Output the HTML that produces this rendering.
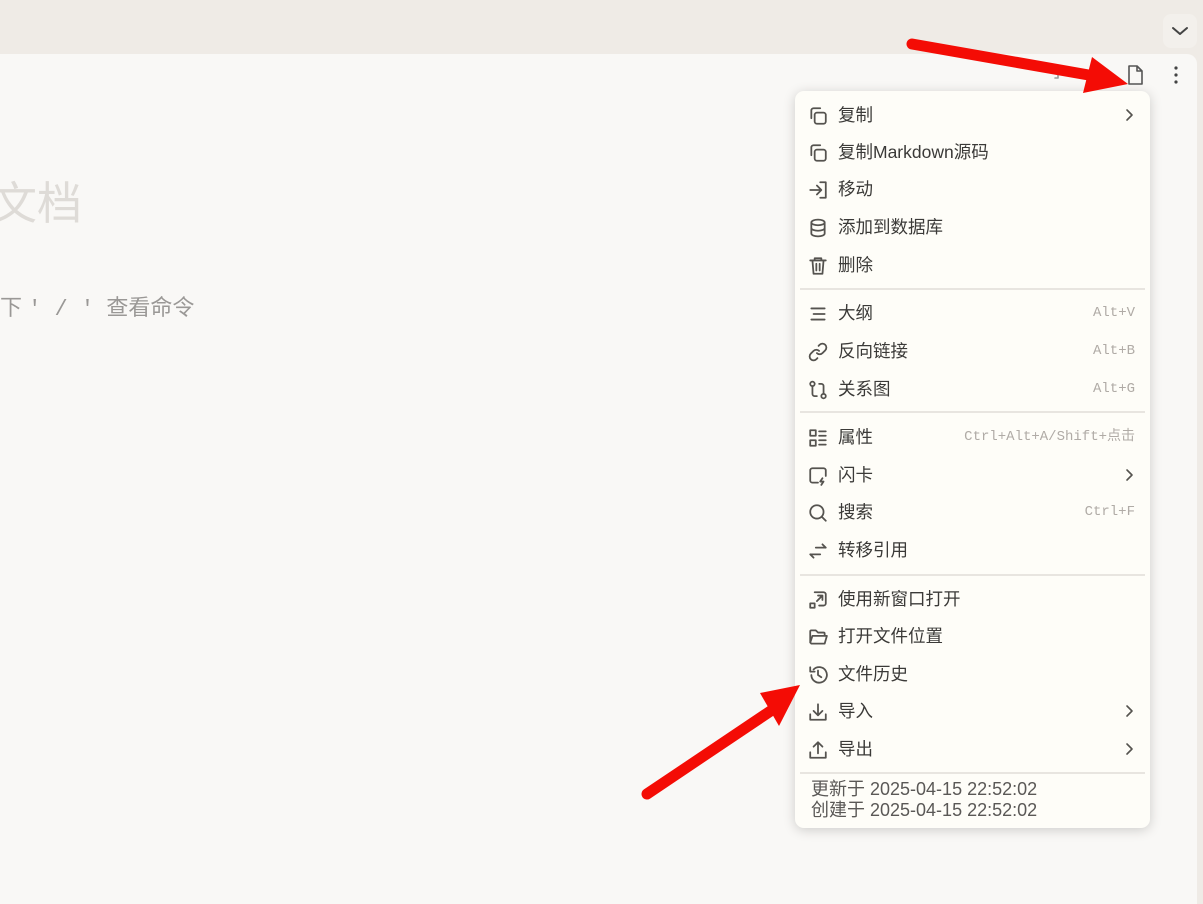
<!DOCTYPE html>
<html><head><meta charset="utf-8"><style>
*{margin:0;padding:0;box-sizing:border-box}
body{width:1203px;height:894px;overflow:hidden;background:#efebe6;font-family:"Liberation Sans","Noto Sans CJK SC",sans-serif;position:relative}
.main{position:absolute;left:0;top:54px;width:1197px;height:850px;background:#f9f8f6;border-top-right-radius:10px}
.chev{position:absolute;left:1163px;top:14px;width:34px;height:34px;border-radius:8px;background:#f3f0ec}
.title{position:absolute;left:-8px;top:174px;font-size:45px;color:#dedbd7;line-height:60px}
.hint{position:absolute;left:0;top:293px;font-size:22px;color:#9a9896;white-space:pre;line-height:30px}
.menu{position:absolute;left:795px;top:91px;width:355px;height:737px;background:#fefdf8;border-radius:9px;box-shadow:0 2px 12px rgba(0,0,0,.18)}
.r{position:absolute;left:0;width:355px;height:36px}
.r svg{position:absolute;left:13px;top:9px}
.r svg.a{left:auto;right:14px;top:10px}
.r .t{position:absolute;left:43px;top:6px;font-size:17.5px;color:#3b3a38;line-height:24px}
.r .k{position:absolute;right:15px;top:10px;font-family:"Liberation Mono","Noto Sans CJK SC",monospace;font-size:14px;color:#b0aba6;line-height:16px}
.sep{position:absolute;left:5px;width:345px;height:2px;background:#e8e5e0}
.foot{position:absolute;left:16px;top:688px;font-size:18px;color:#5a5856;line-height:21px}
svg{fill:none;stroke:#55534f;stroke-width:1.6;stroke-linecap:round;stroke-linejoin:round}
</style></head><body>
<div class="chev"><svg width="34" height="34" viewBox="0 0 34 34"><path d="M10 14l7 6 7-6" stroke="#444" stroke-width="2"/></svg></div>
<div class="main"></div>
<div class="title">文档</div>
<div class="hint">下 <span style="font-family:'Liberation Mono',monospace">' / '</span>  查看命令</div>
<svg style="position:absolute;left:1045px;top:65px" width="20" height="20" viewBox="0 0 20 20"><circle cx="5" cy="7" r="1.3" fill="#888" stroke="none"/><path d="M8 7h5v6h-3" stroke="#999"/></svg>
<svg style="position:absolute;left:1125px;top:64px" width="20" height="22" viewBox="0 0 20 22"><path d="M4 2h8l5 5v13H4z M12 2v5h5" stroke="#555"/></svg>
<svg style="position:absolute;left:1166px;top:64px" width="20" height="22" viewBox="0 0 20 22"><circle cx="10" cy="4" r="1.6" fill="#444" stroke="none"/><circle cx="10" cy="11" r="1.6" fill="#444" stroke="none"/><circle cx="10" cy="18" r="1.6" fill="#444" stroke="none"/></svg>
<div class="menu">
<div class="r" style="top:6px"><svg width="20" height="20" viewBox="0 0 18 18"><rect x="6" y="6" width="10" height="10" rx="2"/><path d="M3 11V4a2 2 0 0 1 2-2h6"/></svg><span class="t">复制</span><svg class="a" width="12" height="16" viewBox="0 0 12 16"><path d="M3 3l5 5-5 5"/></svg></div>
<div class="r" style="top:43px"><svg width="20" height="20" viewBox="0 0 18 18"><rect x="6" y="6" width="10" height="10" rx="2"/><path d="M3 11V4a2 2 0 0 1 2-2h6"/></svg><span class="t">复制Markdown源码</span></div>
<div class="r" style="top:80px"><svg width="20" height="20" viewBox="0 0 18 18"><path d="M2 9h9M8 5l4 4-4 4M11 2h5v14h-5"/></svg><span class="t">移动</span></div>
<div class="r" style="top:118px"><svg width="20" height="20" viewBox="0 0 18 18"><ellipse cx="9" cy="4" rx="6" ry="2.5"/><path d="M3 4v10c0 1.4 2.7 2.5 6 2.5s6-1.1 6-2.5V4M3 9c0 1.4 2.7 2.5 6 2.5s6-1.1 6-2.5"/></svg><span class="t">添加到数据库</span></div>
<div class="r" style="top:156px"><svg width="20" height="20" viewBox="0 0 18 18"><path d="M2 4h14M6 4V2h6v2M4 4l1 12h8l1-12M7.5 7v6M10.5 7v6"/></svg><span class="t">删除</span></div>
<div class="sep" style="top:197px"></div>
<div class="r" style="top:204px"><svg width="20" height="20" viewBox="0 0 18 18"><path d="M3 4h12M5 9h10M3 14h12"/></svg><span class="t">大纲</span><span class="k">Alt+V</span></div>
<div class="r" style="top:242px"><svg width="20" height="20" viewBox="0 0 18 18"><path d="M8 10a3.5 3.5 0 0 0 5 0l2.5-2.5a3.5 3.5 0 0 0-5-5L9.5 3.5M10 8a3.5 3.5 0 0 0-5 0L2.5 10.5a3.5 3.5 0 0 0 5 5l1-1"/></svg><span class="t">反向链接</span><span class="k">Alt+B</span></div>
<div class="r" style="top:280px"><svg width="20" height="20" viewBox="0 0 18 18"><circle cx="4" cy="3.5" r="2"/><circle cx="14" cy="14.5" r="2"/><path d="M4 5.5v7a2 2 0 0 0 2 2h2M14 12.5v-7a2 2 0 0 0-2-2h-2"/></svg><span class="t">关系图</span><span class="k">Alt+G</span></div>
<div class="sep" style="top:320px"></div>
<div class="r" style="top:328px"><svg width="20" height="20" viewBox="0 0 18 18"><rect x="2" y="2" width="5" height="5"/><rect x="2" y="11" width="5" height="5"/><path d="M10 3h6M10 7h6M10 11h6M10 15h6"/></svg><span class="t">属性</span><span class="k">Ctrl+Alt+A/Shift+点击</span></div>
<div class="r" style="top:366px"><svg width="20" height="20" viewBox="0 0 18 18"><path d="M9 15H4a2 2 0 0 1-2-2V4a2 2 0 0 1 2-2h10a2 2 0 0 1 2 2v5M13 11l-2 3h3l-2 3"/></svg><span class="t">闪卡</span><svg class="a" width="12" height="16" viewBox="0 0 12 16"><path d="M3 3l5 5-5 5"/></svg></div>
<div class="r" style="top:403px"><svg width="20" height="20" viewBox="0 0 18 18"><circle cx="8" cy="8" r="6"/><path d="M12.5 12.5L16 16"/></svg><span class="t">搜索</span><span class="k">Ctrl+F</span></div>
<div class="r" style="top:441px"><svg width="20" height="20" viewBox="0 0 18 18"><path d="M7 6h9M13 3l3 3M2 12h9M5 15l-3-3"/></svg><span class="t">转移引用</span></div>
<div class="sep" style="top:483px"></div>
<div class="r" style="top:490px"><svg width="20" height="20" viewBox="0 0 18 18"><path d="M6 2h8a2 2 0 0 1 2 2v8a2 2 0 0 1-2 2h-4M8 10l5-5M9 5h4v4"/><rect x="2" y="12" width="4" height="4"/></svg><span class="t">使用新窗口打开</span></div>
<div class="r" style="top:527px"><svg width="20" height="20" viewBox="0 0 18 18"><path d="M2 14V4a1 1 0 0 1 1-1h4l2 2h5a1 1 0 0 1 1 1v2M2 14l2-6h13l-2 7H3z"/></svg><span class="t">打开文件位置</span></div>
<div class="r" style="top:565px"><svg width="20" height="20" viewBox="0 0 18 18"><path d="M3 9a7 7 0 1 0 2-5M2 2v4h4M9 5v4l3 2"/></svg><span class="t">文件历史</span></div>
<div class="r" style="top:602px"><svg width="20" height="20" viewBox="0 0 18 18"><path d="M2 11v5h14v-5M9 2v10M5 8l4 4 4-4"/></svg><span class="t">导入</span><svg class="a" width="12" height="16" viewBox="0 0 12 16"><path d="M3 3l5 5-5 5"/></svg></div>
<div class="r" style="top:640px"><svg width="20" height="20" viewBox="0 0 18 18"><path d="M2 11v5h14v-5M9 12V2M5 6l4-4 4 4"/></svg><span class="t">导出</span><svg class="a" width="12" height="16" viewBox="0 0 12 16"><path d="M3 3l5 5-5 5"/></svg></div>
<div class="sep" style="top:681px"></div>
<div class="foot">更新于 2025-04-15 22:52:02<br>创建于 2025-04-15 22:52:02</div>
</div>
<svg style="position:absolute;left:0;top:0;stroke:none" width="1203" height="894">
<path d="M912 44L1100 77" stroke="#f40c05" stroke-width="11" stroke-linecap="round" fill="none"/>
<polygon points="1128,84 1092,57 1083,93" fill="#f40c05"/>
<path d="M647 794L775 708" stroke="#f40c05" stroke-width="11" stroke-linecap="round" fill="none"/>
<polygon points="800,685 760,693 779,726" fill="#f40c05"/>
</svg>
</body></html>
